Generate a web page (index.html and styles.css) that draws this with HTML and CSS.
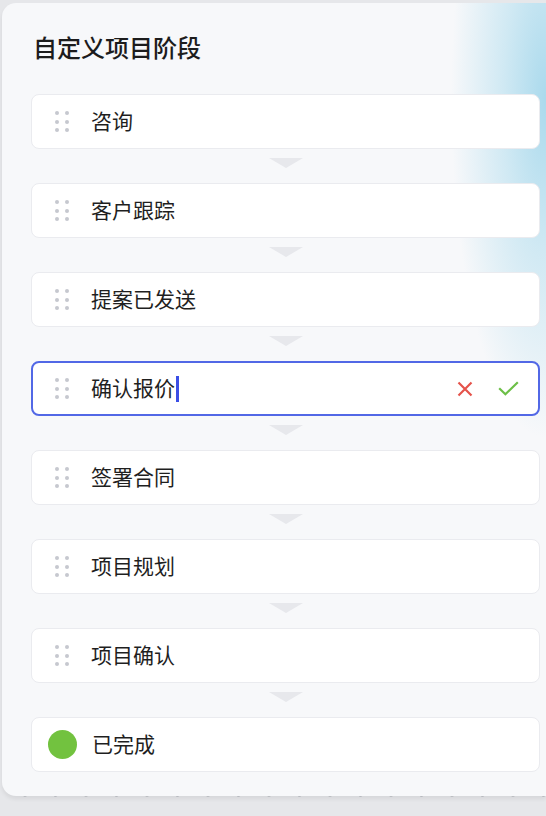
FILE: index.html
```html
<!DOCTYPE html>
<html>
<head>
  <meta charset="UTF-8">
  <meta name="viewport" content="width=device-width, initial-scale=1.0">
  <title>自定义项目阶段</title>
  <link rel="stylesheet" href="styles.css">
</head>
<body>
  <div class="panel">
    <h1 class="panel-title">自定义项目阶段</h1>

    <div class="stages">
      <div class="stage">
        <span class="handle"><i></i><i></i><i></i><i></i><i></i><i></i></span>
        <span class="stage-name">咨询</span>
      </div>
      <div class="link"><span class="arrow"></span></div>

      <div class="stage">
        <span class="handle"><i></i><i></i><i></i><i></i><i></i><i></i></span>
        <span class="stage-name">客户跟踪</span>
      </div>
      <div class="link"><span class="arrow"></span></div>

      <div class="stage">
        <span class="handle"><i></i><i></i><i></i><i></i><i></i><i></i></span>
        <span class="stage-name">提案已发送</span>
      </div>
      <div class="link"><span class="arrow"></span></div>

      <!-- 正在编辑 -->
      <div class="stage editing">
        <span class="handle"><i></i><i></i><i></i><i></i><i></i><i></i></span>
        <span class="stage-name">确认报价</span><span class="caret"></span>
        <span class="actions">
          <svg class="icon-cancel" width="16" height="16" viewBox="0 0 16 16">
            <path d="M1.5 1.5 L14.5 14.5 M14.5 1.5 L1.5 14.5" />
          </svg>
          <svg class="icon-ok" width="21" height="15" viewBox="0 0 21 15">
            <path d="M1.2 7.2 L7.4 13.2 L19.8 1.2" />
          </svg>
        </span>
      </div>
      <div class="link"><span class="arrow"></span></div>

      <div class="stage">
        <span class="handle"><i></i><i></i><i></i><i></i><i></i><i></i></span>
        <span class="stage-name">签署合同</span>
      </div>
      <div class="link"><span class="arrow"></span></div>

      <div class="stage">
        <span class="handle"><i></i><i></i><i></i><i></i><i></i><i></i></span>
        <span class="stage-name">项目规划</span>
      </div>
      <div class="link"><span class="arrow"></span></div>

      <div class="stage">
        <span class="handle"><i></i><i></i><i></i><i></i><i></i><i></i></span>
        <span class="stage-name">项目确认</span>
      </div>
      <div class="link"><span class="arrow"></span></div>

      <div class="stage done">
        <span class="done-dot"></span>
        <span class="stage-name">已完成</span>
      </div>
    </div>
  </div>
  <div class="floor"></div>
</body>
</html>
```

FILE: styles.css
```css
body {
  margin: 0;
  height: 816px;
  overflow: hidden;
  background-color: #e6e7ea;
  font-family: "Noto Sans CJK SC", "Noto Sans", sans-serif;
  color: #1f1f1f;
}

.panel {
  box-sizing: border-box;
  width: 544px;
  height: 793px;
  margin: 3px 0 0 2px;
  padding: 28px 6px 0 29px;
  border-radius: 14px 0 0 14px;
  background-color: #f7f8fa;
  background-image:
    radial-gradient(ellipse 95px 340px at 100% 12%, rgba(166, 216, 236, 0.95) 0%, rgba(182, 223, 239, 0.6) 45%, rgba(247, 248, 250, 0) 100%);
  box-shadow: 0 3px 4px rgba(0, 0, 0, 0.07);
  position: relative;
  z-index: 1;
}

.panel-title {
  margin: 0 0 31px 2px;
  font-size: 24px;
  line-height: 32px;
  font-weight: 500;
  color: #1c1c1c;
}

.stage {
  box-sizing: border-box;
  height: 55px;
  display: flex;
  align-items: center;
  padding-left: 23px;
  padding-bottom: 3px;
  background-color: #FFFFFF;
  border: 1px solid #eaebef;
  border-radius: 8px;
}

.handle {
  display: grid;
  grid-template-columns: 4px 4px;
  column-gap: 6px;
  row-gap: 4.5px;
  margin-top: 3px;
  margin-right: 22px;
}

.handle i {
  display: block;
  width: 4px;
  height: 4px;
  border-radius: 50%;
  background-color: #c6c8cf;
}

.stage-name {
  font-size: 21px;
  line-height: 28px;
}

.stage.editing {
  border: 2px solid #5268e6;
  padding-left: 22px;
  padding-right: 19px;
}

.caret {
  display: inline-block;
  width: 3px;
  height: 26px;
  margin-left: 1px;
  margin-top: 3px;
  background-color: #3b4fe6;
}

.actions {
  margin-left: auto;
  margin-top: 3px;
  display: flex;
  align-items: center;
  gap: 25px;
}

.actions svg {
  display: block;
  fill: none;
  stroke-width: 2.2;
  stroke-linecap: butt;
}

.icon-cancel { stroke: #e5534b; }
.icon-ok { stroke: #6cbf47; }

.stage.done {
  padding-left: 16px;
}

.done-dot {
  width: 29px;
  height: 29px;
  border-radius: 50%;
  background-color: #72c23f;
  margin-top: 3px;
  margin-right: 15px;
}

.link {
  height: 34px;
  display: flex;
  justify-content: center;
}

.arrow {
  width: 0;
  height: 0;
  margin-top: 8.5px;
  border-left: 17px solid transparent;
  border-right: 17px solid transparent;
  border-top: 10px solid #e7e8ec;
}

.floor {
  height: 20px;
  margin-top: -3px;
  background-image: radial-gradient(circle at 25px 2px, #c3c5cb 1.6px, transparent 2.2px);
  background-size: 30.5px 20px;
}
```
